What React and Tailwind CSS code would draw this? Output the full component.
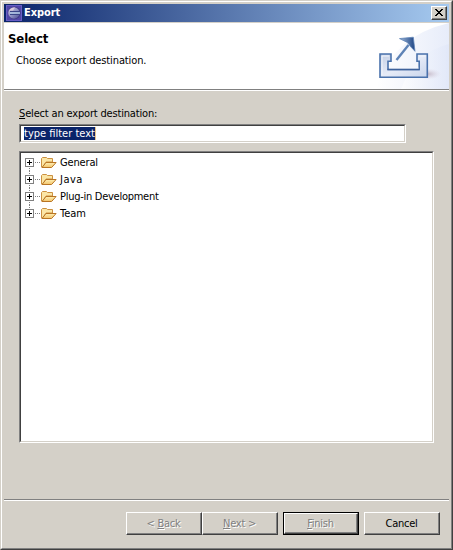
import React from "react";

const font = "font-['DejaVu_Sans_Condensed','DejaVu_Sans',sans-serif] [font-stretch:condensed]";

function EclipseIcon() {
  return (
    <svg width="16" height="16" viewBox="0 0 16 16" className="block shrink-0">
      <defs>
        <linearGradient id="orb" x1="0" y1="0" x2="1" y2="1">
          <stop offset="0" stopColor="#d3c2dc" />
          <stop offset="0.5" stopColor="#9094c6" />
          <stop offset="1" stopColor="#454590" />
        </linearGradient>
      </defs>
      <rect width="16" height="16" fill="#5146a6" />
      <rect x="0.5" y="0.5" width="15" height="15" fill="none" stroke="#675dc4" />
      <circle cx="8.3" cy="8" r="6.2" fill="#3b3380" />
      <circle cx="8" cy="8" r="5.8" fill="url(#orb)" />
      <path d="M3 5.5Q5 2.4 9 2.5L7 5.5Z" fill="#d9cbdc" />
      <path d="M4 6.5h10M4 9.5h10" stroke="#3a4488" />
      <path d="M4 8h10" stroke="#a9c0e0" strokeWidth="1.6" />
    </svg>
  );
}

function ExportBanner() {
  return (
    <svg width="75" height="66" viewBox="374 23 75 66" className="block shrink-0">
      <defs>
        <linearGradient id="sky" x1="0" y1="0" x2="1" y2="0">
          <stop offset="0" stopColor="#ffffff" />
          <stop offset="1" stopColor="#dfe6f8" />
        </linearGradient>
        <linearGradient id="tray" x1="0" y1="0" x2="1" y2="1">
          <stop offset="0" stopColor="#c3cfe5" />
          <stop offset="0.5" stopColor="#e6ebf7" />
          <stop offset="1" stopColor="#c9d5ec" />
        </linearGradient>
        <linearGradient id="head" x1="0" y1="0" x2="1" y2="0">
          <stop offset="0" stopColor="#9db7d8" />
          <stop offset="1" stopColor="#1d4484" />
        </linearGradient>
        <radialGradient id="shadow">
          <stop offset="0" stopColor="#b9a9b9" stopOpacity="0.75" />
          <stop offset="1" stopColor="#d8d0df" stopOpacity="0" />
        </radialGradient>
      </defs>
      <path d="M376 89Q392 36 449 23V89Z" fill="url(#sky)" opacity="0.75" />
      <path d="M401 89Q415 52 449 44V89Z" fill="url(#sky)" opacity="0.65" />
      <ellipse cx="428" cy="74" rx="13" ry="5.5" fill="url(#shadow)" />
      <path
        d="M380 54H391V61.3H388V69.5H419.2V61.3H417V54H427.3V77.3H380Z"
        fill="url(#tray)"
        stroke="#4a72ac"
        strokeWidth="1.6"
      />
      <path d="M382 75.5V56H389M419 56H425.5" fill="none" stroke="#f3f6fc" />
      <path d="M389 68.2H418.5" stroke="#f5f8fd" />
      <path d="M387.5 69.6H419.5" stroke="#3d619b" strokeWidth="1.5" />
      <path d="M396.5 60L408.5 45" stroke="#5e83b6" strokeWidth="2.4" />
      <path d="M399.5 38.6L413.3 37.2L415 51.3L411.2 47.3L407.3 42.4Z" fill="url(#head)" stroke="#5f84b6" strokeWidth="0.8" />
    </svg>
  );
}

function Folder() {
  return (
    <svg width="16" height="13" viewBox="0 0 16 13" className="block shrink-0">
      <defs>
        <linearGradient id="flap" x1="0" y1="0" x2="0" y2="1">
          <stop offset="0" stopColor="#fff0b4" />
          <stop offset="1" stopColor="#f2c46b" />
        </linearGradient>
      </defs>
      <path d="M0.5 11V2.5L1.5 1.5H5.5L6.5 2.5H11.5V6H5L1.5 11.5Z" fill="#fbe6a6" stroke="#cb9040" />
      <path d="M1 11.5L5 6.5H15.1L10.6 11.5Z" fill="url(#flap)" stroke="#b97524" />
    </svg>
  );
}

function TreeRow({ label, first, last, spacing }) {
  return (
    <div className="flex h-[17px] items-center">
      <svg width="16" height="17" viewBox="0 0 16 17" className="block shrink-0" shapeRendering="crispEdges">
        {!last && <path d="M4.5 14v3" stroke="#808080" strokeDasharray="1 1" />}
        {!first && <path d="M4.5 0v4" stroke="#808080" strokeDasharray="1 1" />}
        <path d="M10 8.5h6" stroke="#808080" strokeDasharray="1 1" />
        <rect x="0.5" y="4.5" width="8" height="8" fill="#fff" stroke="#808080" />
        <path d="M2 8.5h5M4.5 6v5" stroke="#000" />
      </svg>
      <Folder />
      <span className={`ml-[3px] leading-[17px] ${spacing}`}>{label}</span>
    </div>
  );
}

function Button({ children, disabled, primary }) {
  return (
    <div className={`h-[23px] w-[76px] ${primary ? "bg-black p-px" : ""}`}>
      <div className="h-full border border-t-white border-l-white border-r-[#404040] border-b-[#404040] bg-[#d4d0c8]">
        <div
          className={`flex h-full items-center justify-center border-r border-b border-[#808080] leading-none tracking-[-0.25px] whitespace-pre ${
            disabled ? "text-[#808080] [text-shadow:1px_1px_0_#fff]" : ""
          }`}
        >
          <span>{children}</span>
        </div>
      </div>
    </div>
  );
}

const U = ({ children }) => <span className="underline underline-offset-1 decoration-1">{children}</span>;

const sunken = "border border-t-[#808080] border-l-[#808080] border-r-white border-b-white";
const sunkenInner = "h-full border border-t-[#404040] border-l-[#404040] border-r-[#d4d0c8] border-b-[#d4d0c8] bg-white";

export default function App() {
  return (
    <div className={`h-[550px] w-[453px] overflow-hidden border border-t-[#d4d0c8] border-l-[#d4d0c8] border-r-[#404040] border-b-[#404040] bg-[#d4d0c8] text-[11px] text-black ${font}`}>
      <div className="flex h-full flex-col border border-t-white border-l-white border-r-[#808080] border-b-[#808080] p-[2px]">
        <div className="flex h-[18px] w-[445px] shrink-0 items-center bg-[linear-gradient(to_right_in_srgb,#0a246a,#a6caf0)] pr-[2px] pl-[2px]">
          <EclipseIcon />
          <span className="ml-[2px] flex-1 leading-[18px] font-bold tracking-[-0.1px] text-white">Export</span>
          <div className="h-[14px] w-4 border border-t-white border-l-white border-r-[#404040] border-b-[#404040] bg-[#d4d0c8]">
            <div className="h-full border-r border-b border-[#808080]">
              <svg width="13" height="11" viewBox="0 0 13 11" className="block" shapeRendering="crispEdges">
                <path
                  d="M3 2h2v1h1v1h2v-1h1v-1h2v1h-1v1h-1v1h-1v1h1v1h1v1h1v1h-2v-1h-1v-1h-2v1h-1v1h-2v-1h1v-1h1v-1h1v-1h-1v-1h-1v-1h-1z"
                  fill="#000"
                />
              </svg>
            </div>
          </div>
        </div>
        <div className="mt-px flex h-[66px] w-[445px] shrink-0 justify-between bg-white">
          <div className="pt-[7px] pl-1">
            <div className="text-[13px] leading-[17px] font-bold tracking-[-0.1px]">Select</div>
            <div className="mt-[6px] ml-2 leading-[16px] tracking-[-0.12px]">Choose export destination.</div>
          </div>
          <ExportBanner />
        </div>
        <div className="h-[2px] w-[445px] shrink-0 border-t border-b border-t-[#808080] border-b-white" />
        <div className="h-[408px] shrink-0 pt-[15px] pl-[15px]">
          <div className="h-[18px] leading-[16px] tracking-[-0.17px]"><U>S</U>elect an export destination:</div>
          <div className={`h-[19px] w-[387px] ${sunken}`}>
            <div className={`${sunkenInner} flex items-center pl-[3px]`}>
              <span className="h-[13px] border-r border-[#e8c48c] bg-[#0a246a] leading-[13px] text-white">type filter text</span>
            </div>
          </div>
          <div className={`mt-2 h-[292px] w-[415px] ${sunken}`}>
            <div className={`${sunkenInner} pt-px pl-1`}>
              <TreeRow label="General" first spacing="tracking-[-0.15px]" />
              <TreeRow label="Java" spacing="tracking-[0.5px]" />
              <TreeRow label="Plug-in Development" spacing="tracking-[-0.27px]" />
              <TreeRow label="Team" last spacing="" />
            </div>
          </div>
        </div>
        <div className="h-[2px] w-[445px] shrink-0 border-t border-b border-t-[#808080] border-b-white" />
        <div className="mt-[11px] flex justify-end gap-[5px] pr-[9px]">
          <div className="flex">
            <Button disabled>&lt; <U>B</U>ack</Button>
            <Button disabled><U>N</U>ext &gt;</Button>
          </div>
          <Button disabled primary><U>F</U>inish</Button>
          <Button>Cancel</Button>
        </div>
      </div>
    </div>
  );
}
